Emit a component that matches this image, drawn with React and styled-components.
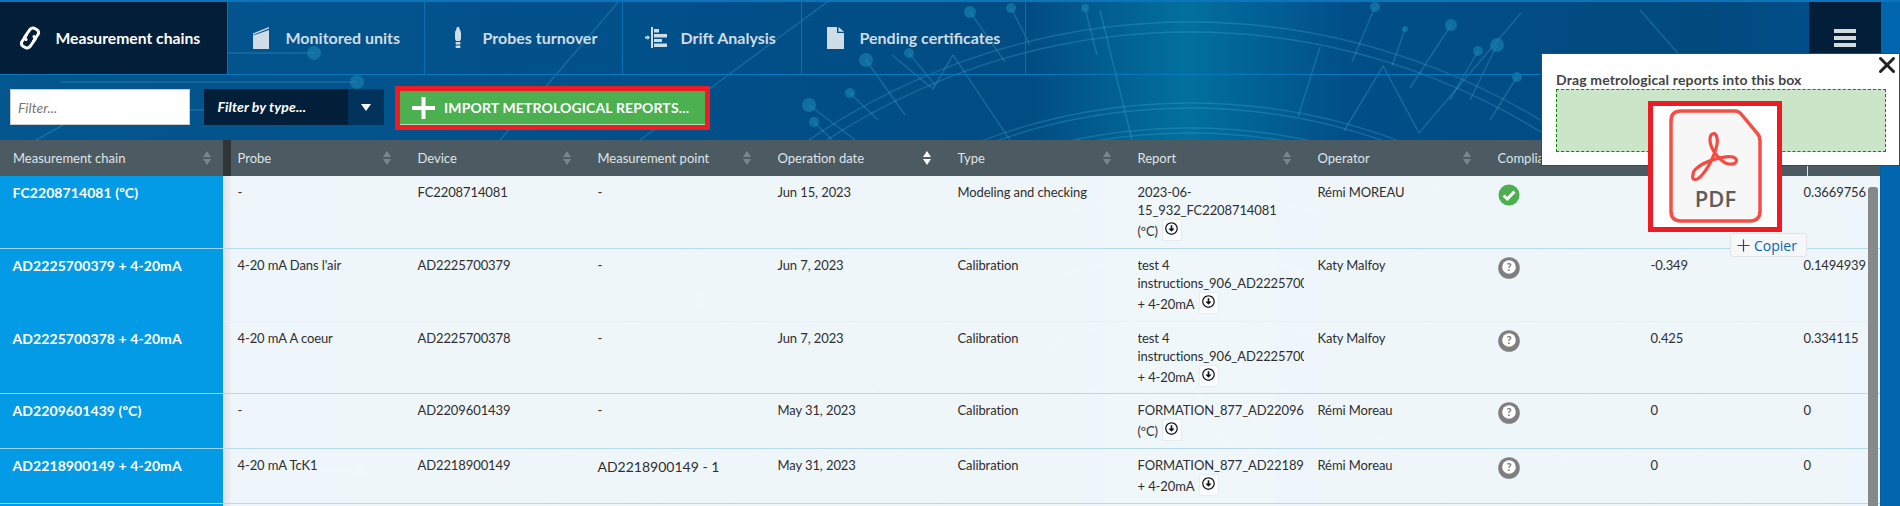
import React from 'react';
import styled, {createGlobalStyle} from 'styled-components';
import {FaRegArrowAltCircleDown} from 'react-icons/fa';
import {Plus, X} from 'lucide-react';

const GlobalStyle = createGlobalStyle`
  html, body { margin: 0; padding: 0; background: #014a80; }
  * { box-sizing: border-box; }
  body { font-family: Lato, "Liberation Sans", sans-serif; font-size: 13px; color: #2e2e2e; }
`;

const Page = styled.div`
  position: relative;
  width: 1900px;
  height: 506px;
  overflow: hidden;
  border-top: 2px solid #0a75bd;
  background: linear-gradient(90deg, #04568f 0, #014f88 40%, #014c82 54%, #02709e 62.5%, #014e88 71%, #014a7e 90%, #01508f 98.9%, #0166ae 99%);
`;

const Backdrop = styled.svg`
  position: absolute;
  left: 0;
  top: -2px;
  width: 1900px;
  height: 506px;
  pointer-events: none;
`;

const Nav = styled.nav`
  position: relative;
  display: flex;
  height: 73px;
  border-bottom: 1px solid #0a78c0;
`;

const Tab = styled.div`
  display: flex;
  align-items: center;
  width: ${p => p.$width}px;
  padding-left: ${p => (p.$active ? 11 : 14)}px;
  padding-bottom: 1px;
  background: ${p => (p.$active ? '#021e38' : 'transparent')};
  border-right: 1px solid #0a6fb4;
  color: ${p => (p.$active ? '#fff' : '#cfdde6')};
  font-size: ${p => (p.$active ? 15.7 : 16)}px;
  font-weight: 700;
`;

const TabIcon = styled.span`
  display: flex;
  justify-content: center;
  width: 38px;
  margin-right: ${p => (p.$active ? 6.5 : 5.5)}px;
`;

const MenuButton = styled.div`
  display: flex;
  flex-direction: column;
  align-items: center;
  gap: 3px;
  width: 72px;
  margin-left: auto;
  margin-right: 19px;
  padding-top: 27px;
  background: #021e38;
  span { width: 22px; height: 4px; background: #d5dadd; }
`;

const Toolbar = styled.div`
  position: relative;
  display: flex;
  align-items: flex-start;
  height: 65px;
  padding: 14px 0 0 10px;
`;

const FilterInput = styled.input`
  width: 180px;
  height: 36px;
  padding: 0 7px;
  border: 1px solid #ccc;
  background: #fff;
  font: italic 14px Lato, sans-serif;
  &::placeholder { color: #777; opacity: 1; }
`;

const TypeSelect = styled.div`
  display: flex;
  width: 180px;
  height: 36px;
  margin-left: 14px;
  background: #02335a;
`;

const TypeLabel = styled.div`
  display: flex;
  align-items: center;
  width: 144px;
  padding: 0 0 2px 13.5px;
  background: #021e38;
  color: #fff;
  font-size: 14px;
  font-style: italic;
  font-weight: 700;
  letter-spacing: 0.1px;
`;

const TypeArrow = styled.div`
  flex: 1;
  display: flex;
  align-items: center;
  justify-content: center;
  &::after {
    content: '';
    border-left: 5px solid transparent;
    border-right: 5px solid transparent;
    border-top: 7px solid #fff;
  }
`;

const ImportFrame = styled.div`
  width: 315px;
  height: 44px;
  margin: -3px 0 0 11px;
  border: 5px solid #ed1c24;
`;

const ImportButton = styled.button`
  display: flex;
  align-items: center;
  gap: 9px;
  width: 100%;
  height: 100%;
  padding: 0 0 0 12px;
  border: 0;
  border-bottom: 1px solid #b4dcb6;
  background: #4caf50;
  color: #fff;
  font: 700 14px Lato, sans-serif;
  letter-spacing: 0.14px;
  text-transform: uppercase;
`;

const Table = styled.div`
  position: relative;
  width: 1880px;
`;

const columns = '223px 8px repeat(7, 180px) 153px 153px 77px';

const HeaderRow = styled.div`
  display: grid;
  grid-template-columns: ${columns};
  height: 36px;
  background: #4c5a61;
  color: #dfe5e8;
`;

const HeaderCell = styled.div`
  position: relative;
  display: flex;
  align-items: center;
  justify-content: space-between;
  padding: 0 ${p => (p.$first ? 12 : 20)}px 0 ${p => (p.$first ? 13 : 6.5)}px;
`;

const HeaderGap = styled.div`
  background: #303538;
`;

const HeaderTick = styled.span`
  position: absolute;
  left: 10px;
  bottom: 0;
  width: 1px;
  height: 10px;
  background: #dfe5e8;
`;

const Row = styled.div`
  display: grid;
  grid-template-columns: ${columns};
  height: ${p => p.$height}px;
  background: rgba(249, 253, 255, 0.96);
  border-bottom: 1px solid ${p => (p.$seamless ? 'rgba(180, 217, 239, 0.15)' : '#b5d9ef')};
`;

const ChainCell = styled.div`
  margin-bottom: -1px;
  padding: 8px 0 0 12.5px;
  background: #039be5;
  border-bottom: 1px solid ${p => (p.$seamless ? '#039be5' : '#9ad6f5')};
  color: #fff;
  font-size: 14px;
  font-weight: 700;
  letter-spacing: 0.08px;
  line-height: 18px;
`;

const RowGap = styled.div`
  background: linear-gradient(90deg, #dde1e4, #eef2f5);
`;

const Cell = styled.div`
  padding: ${p => (p.$large ? 9 : 7)}px 0 0 6.5px;
  font-size: ${p => (p.$large ? 14 : 13)}px;
  letter-spacing: ${p => (p.$large ? 0 : -0.1)}px;
  line-height: 18px;
  white-space: nowrap;
`;

const ReportLine = styled.span`
  display: block;
  max-width: 166px;
  overflow: hidden;
`;

const DownloadLine = styled.span`
  display: flex;
  align-items: center;
  height: 24px;
`;

const DownloadButton = styled.span`
  display: inline-flex;
  align-items: center;
  justify-content: center;
  align-self: flex-start;
  width: 20px;
  height: 22px;
  margin-left: 4px;
  padding-bottom: 3px;
  border: 1px solid #e6edf2;
  border-radius: 2px;
  background: #fbfdfe;
  color: #111;
  font-size: 13px;
`;

const StatusIcon = styled.svg`
  display: block;
  width: 22px;
  height: 22px;
  margin-top: 1px;
`;

const Scrollbar = styled.div`
  position: absolute;
  right: 2px;
  top: 47px;
  bottom: -100px;
  width: 10px;
  border-radius: 3px 3px 0 0;
  background: #85898c;
`;

const Popup = styled.div`
  position: absolute;
  left: 1541px;
  top: 51px;
  width: 359px;
  height: 113px;
  padding: 17px 14px 0;
  border: 1px solid #444;
  background: #fff;
`;

const PopupTitle = styled.div`
  color: #444;
  font-size: 14px;
  font-weight: 700;
  letter-spacing: 0.15px;
  line-height: 17px;
`;

const DropZone = styled.div`
  width: 330px;
  height: 63px;
  margin-top: 1px;
  border: 1px dashed #0a8a0a;
  background: #cbe5c9;
`;

const CloseIcon = styled(X)`
  position: absolute;
  right: -1px;
  top: -2px;
  color: #222;
`;

const DragFrame = styled.div`
  position: absolute;
  left: 1648px;
  top: 99px;
  width: 134px;
  height: 131px;
  padding: 3px 0 0 16px;
  border: 5px solid #ed1c24;
  background: #fff;
`;

const DragFile = styled.div`
  position: relative;
  width: 93px;
  height: 114px;
`;

const DragLabel = styled.span`
  position: absolute;
  left: 0;
  right: 0;
  top: 74px;
  color: #5c5c5c;
  font: 600 22px "Open Sans", sans-serif;
  text-align: center;
`;

const CopyHint = styled.div`
  position: absolute;
  left: 1730px;
  top: 231px;
  display: flex;
  align-items: center;
  gap: 1px;
  width: 77px;
  height: 24px;
  padding-left: 3px;
  border: 1px solid #e2e4e6;
  border-radius: 3px;
  background: #f6f7f8;
  color: #0067b8;
  font: 14px "Open Sans", sans-serif;
  svg { color: #444; }
`;

const pins = [
  [314, 53, 0, 53, 7], [357, 82, 60, 82, 7], [970, 12, 1005, 62, 6], [1011, 8, 1030, 45, 5],
  [866, 60, 905, 115, 7], [909, 53, 935, 85, 5], [850, 93, 878, 120, 5], [809, 105, 855, 140, 7],
  [814, 122, 860, 168, 5], [1375, 7, 1352, 62, 5], [1451, 25, 1410, 88, 6], [1405, 29, 1392, 66, 3],
  [1497, 45, 1470, 100, 7], [1478, 51, 1450, 100, 5], [1517, 77, 1490, 120, 5], [1085, 8, 1097, 55, 4],
  [1200, 400, 1230, 450, 6], [700, 300, 760, 350, 6], [360, 470, 300, 470, 7],
];

const rays = [
  '1521,13 1419,133 1383,66 1344,131', '1320,47 1298,117', '1100,10 1132,140', '953,55 1030,170',
  '953,55 933,89 892,55', '0,160 90,110 340,110', '620,0 500,140', '830,0 640,140',
  '1640,10 1780,170', '1300,440 1560,440 1560,506', '1060,330 1010,506',
];

const arcs = [674, 664, 593, 588, 568, 563, 500, 440, 380, 320];

const Circuit = () => (
  <Backdrop viewBox="0 0 1900 506">
    <g fill="none" stroke="#3ab0cf" strokeOpacity="0.3" strokeWidth="1.5">
      {arcs.map(r => <circle key={r} cx="1190" cy="696" r={r} />)}
      {rays.map(points => <polyline key={points} points={points} />)}
      {pins.map(([x, y, ex, ey]) => <line key={`${x}-${y}-${ex}`} x1={x} y1={y} x2={ex} y2={ey} />)}
    </g>
    <g fill="#1b8db4" fillOpacity="0.55">
      {pins.map(([x, y, ex, ey, r]) => <circle key={`${x}-${y}-${ey}`} cx={x} cy={y} r={r} />)}
    </g>
  </Backdrop>
);

const LinkIcon = () => (
  <svg width="22" height="24" viewBox="0 0 22 24" fill="none" stroke="#fff" strokeWidth="3" strokeLinejoin="round" strokeLinecap="round">
    <path d="M7 13.5 5.7 11 11 3.4Q12.8 1.4 15.2 2.2L18 3.8Q20.3 5.4 19.3 8L14.6 15" />
    <path d="M15 10.500 16.300 13 11 20.600Q9.200 22.600 6.800 21.800L4 20.200Q1.700 18.600 2.700 16L7.400 9" />
  </svg>
);

const UnitIcon = () => (
  <svg width="16" height="22" viewBox="0 0 16 22" fill="#cfdde6">
    <path d="M0 6.500 16 0V1.400L0 8Z" />
    <path d="M0 8.500 16 3V22H0Z" />
  </svg>
);

const ProbeIcon = () => (
  <svg width="8" height="21" viewBox="0 0 8 21" fill="#cfdde6">
    <path d="M3 0H5L6 3 7 5V12L6 14H2L1 12V5L2 3Z" />
    <rect x="1.500" y="15" width="5" height="2.500" rx="1" />
    <rect x="1.500" y="18.500" width="5" height="2.500" rx="1" />
  </svg>
);

const DriftIcon = () => (
  <svg width="22" height="21" viewBox="0 0 22 21" fill="#cfdde6">
    <rect x="6" y="0" width="2" height="21" />
    <path d="M0 9.500H2.500V8L5 10.500 2.500 13V11.500H0Z" />
    <rect x="9" y="2" width="5" height="3.500" />
    <rect x="9" y="7" width="13" height="3.500" />
    <rect x="9" y="12" width="8" height="3" />
    <rect x="9" y="16.500" width="13" height="3.500" />
  </svg>
);

const DocIcon = () => (
  <svg width="17" height="22" viewBox="0 0 17 22" fill="#cfdde6">
    <path d="M0 0H10V6H17V22H0Z" />
    <path d="M11.500 0 17 4.800H11.500Z" />
  </svg>
);

const SortArrows = ({active}) => (
  <svg width="8" height="14" viewBox="0 0 8 14" fill={active ? '#fff' : '#7b868c'}>
    <path d="M4 0 8 6H0Z" />
    <path d="M0 8H8L4 14Z" />
  </svg>
);

const ComplianceIcon = ({ok}) => (ok ? (
  <StatusIcon viewBox="0 0 22 22">
    <circle cx="11" cy="11" r="10.500" fill="#4caf50" />
    <path d="M5.500 11.500 9.300 15 16.500 7.500" fill="none" stroke="#fff" strokeWidth="3" />
  </StatusIcon>
) : (
  <StatusIcon viewBox="0 0 22 22">
    <circle cx="11" cy="11" r="10.800" fill="#7f7f7f" />
    <circle cx="11" cy="10" r="6.800" fill="#fff" />
    <text x="11" y="14" fontSize="11" fontWeight="900" fontFamily="Lato" fill="#7f7f7f" textAnchor="middle">?</text>
  </StatusIcon>
));

const Download = () => (
  <DownloadButton><FaRegArrowAltCircleDown /></DownloadButton>
);

const tabs = [
  {label: 'Measurement chains', width: 228, icon: <LinkIcon />, active: true},
  {label: 'Monitored units', width: 197, icon: <UnitIcon />},
  {label: 'Probes turnover', width: 198, icon: <ProbeIcon />},
  {label: 'Drift Analysis', width: 179, icon: <DriftIcon />},
  {label: 'Pending certificates', width: 224, icon: <DocIcon />},
];

const headers = ['Probe', 'Device', 'Measurement point', 'Operation date', 'Type', 'Report', 'Operator'];

const rows = [
  {
    height: 73, chain: 'FC2208714081 (ºC)', probe: '-', device: 'FC2208714081', point: '-',
    date: 'Jun 15, 2023', type: 'Modeling and checking',
    report: ['2023-06-', '15_932_FC2208714081'], tail: '(ºC)',
    operator: 'Rémi MOREAU', ok: true, a: '', b: '0.3669756',
  },
  {
    height: 73, seamless: true, chain: 'AD2225700379 + 4-20mA', probe: "4-20 mA Dans l'air", device: 'AD2225700379', point: '-',
    date: 'Jun 7, 2023', type: 'Calibration',
    report: ['test 4', 'instructions_906_AD2225700379'], tail: '+ 4-20mA',
    operator: 'Katy Malfoy', a: '-0.349', b: '0.1494939',
  },
  {
    height: 72, chain: 'AD2225700378 + 4-20mA', probe: '4-20 mA A coeur', device: 'AD2225700378', point: '-',
    date: 'Jun 7, 2023', type: 'Calibration',
    report: ['test 4', 'instructions_906_AD2225700378'], tail: '+ 4-20mA',
    operator: 'Katy Malfoy', a: '0.425', b: '0.334115',
  },
  {
    height: 55, chain: 'AD2209601439 (ºC)', probe: '-', device: 'AD2209601439', point: '-',
    date: 'May 31, 2023', type: 'Calibration',
    report: ['FORMATION_877_AD2209601439'], tail: '(ºC)',
    operator: 'Rémi Moreau', a: '0', b: '0',
  },
  {
    height: 55, chain: 'AD2218900149 + 4-20mA', probe: '4-20 mA TcK1', device: 'AD2218900149', point: 'AD2218900149 - 1', largePoint: true,
    date: 'May 31, 2023', type: 'Calibration',
    report: ['FORMATION_877_AD2218900149'], tail: '+ 4-20mA',
    operator: 'Rémi Moreau', a: '0', b: '0',
  },
];

const App = () => (
  <>
    <GlobalStyle />
    <Page>
      <Circuit />
      <Nav>
        {tabs.map(tab => (
          <Tab key={tab.label} $width={tab.width} $active={tab.active}>
            <TabIcon $active={tab.active}>{tab.icon}</TabIcon>
            {tab.label}
          </Tab>
        ))}
        <MenuButton><span /><span /><span /></MenuButton>
      </Nav>
      <Toolbar>
        <FilterInput placeholder="Filter..." />
        <TypeSelect>
          <TypeLabel>Filter by type...</TypeLabel>
          <TypeArrow />
        </TypeSelect>
        <ImportFrame>
          <ImportButton>
            <svg width="23" height="22" viewBox="0 0 23 22" fill="#fff">
              <rect x="9.500" width="4" height="22" />
              <rect y="9" width="23" height="4" />
            </svg>
            Import metrological reports...
          </ImportButton>
        </ImportFrame>
      </Toolbar>
      <Table>
        <HeaderRow>
          <HeaderCell $first>Measurement chain<SortArrows /></HeaderCell>
          <HeaderGap />
          {headers.map(label => (
            <HeaderCell key={label}>{label}<SortArrows active={label === 'Operation date'} /></HeaderCell>
          ))}
          <HeaderCell>Compliance</HeaderCell>
          <HeaderCell />
          <HeaderCell><HeaderTick /></HeaderCell>
        </HeaderRow>
        {rows.map(row => (
          <Row key={row.chain} $height={row.height} $seamless={row.seamless}>
            <ChainCell $seamless={row.seamless}>{row.chain}</ChainCell>
            <RowGap />
            <Cell>{row.probe}</Cell>
            <Cell>{row.device}</Cell>
            <Cell $large={row.largePoint}>{row.point}</Cell>
            <Cell>{row.date}</Cell>
            <Cell>{row.type}</Cell>
            <Cell>
              {row.report.map(line => <ReportLine key={line}>{line}</ReportLine>)}
              <DownloadLine>{row.tail}<Download /></DownloadLine>
            </Cell>
            <Cell>{row.operator}</Cell>
            <Cell><ComplianceIcon ok={row.ok} /></Cell>
            <Cell>{row.a}</Cell>
            <Cell>{row.b}</Cell>
          </Row>
        ))}
        <Row $height={20}>
          <ChainCell />
          <RowGap />
        </Row>
        <Scrollbar />
      </Table>
      <Popup>
        <PopupTitle>Drag metrological reports into this box</PopupTitle>
        <DropZone />
        <CloseIcon size={26} strokeWidth={2.8} />
      </Popup>
      <DragFrame>
        <DragFile>
          <svg width="93" height="114" viewBox="0 0 93 114">
            <path d="M12 2H66Q70 2 73 6L88 24Q91 27 91 32V102Q91 112 81 112H12Q2 112 2 102V12Q2 2 12 2Z" fill="#f7f7f7" stroke="#f44f46" strokeWidth="3.500" />
            <path d="M24 66C22 72 28 72 33 66 42 56 50 36 48 29 47 23 41 23 41 31 41 40 52 54 60 55 68 56 70 50 64 48 56 46 36 52 28 59 25 61 24 63 24 66Z" fill="none" stroke="#f44a42" strokeWidth="3.200" />
          </svg>
          <DragLabel>PDF</DragLabel>
        </DragFile>
      </DragFrame>
      <CopyHint><Plus size={19} strokeWidth={1.5} />Copier</CopyHint>
    </Page>
  </>
);

export default App;
